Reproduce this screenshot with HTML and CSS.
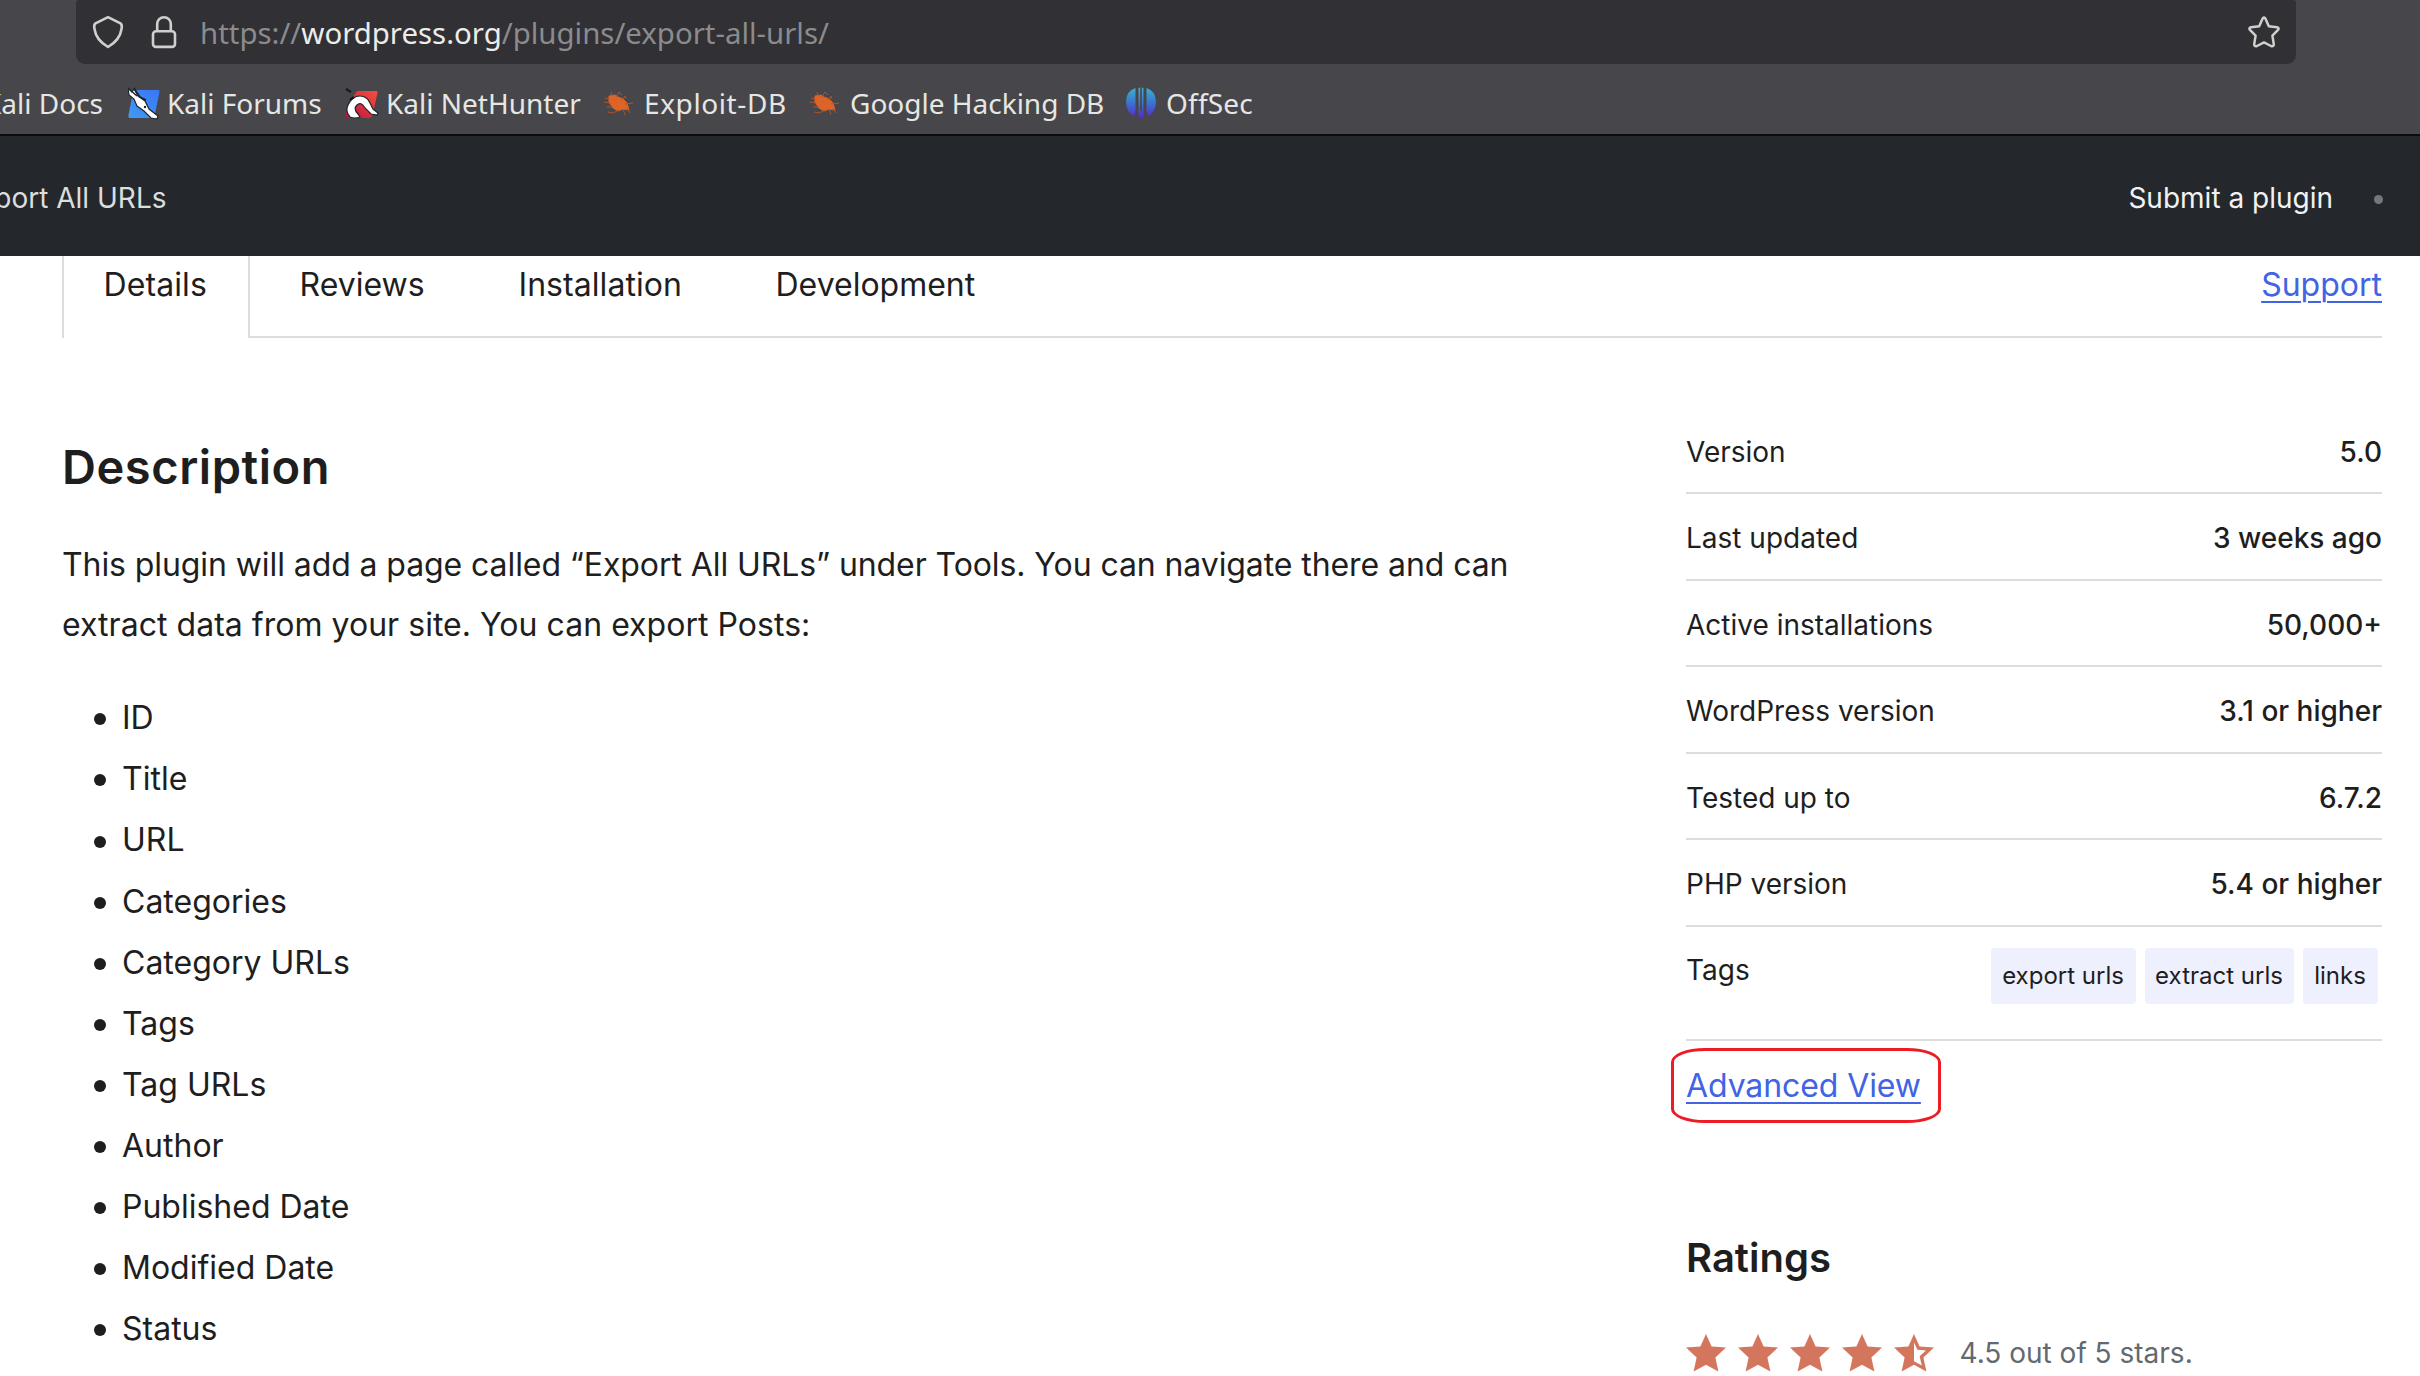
FILE: index.html
```
<!DOCTYPE html>
<html lang="en">
<head>
<meta charset="utf-8">
<title>Export All URLs</title>
<link rel="stylesheet" href="styles.css">
</head>
<body>
<svg class="defs" width="0" height="0" aria-hidden="true">
  <defs>
    <linearGradient id="blue" x1="1" y1="0" x2="0" y2="1"><stop offset="0" stop-color="#3b74f6"/><stop offset="1" stop-color="#3f9bf3"/></linearGradient>
    <linearGradient id="red" x1="1" y1="0" x2="0" y2="1"><stop offset="0" stop-color="#f4503c"/><stop offset="1" stop-color="#bd1240"/></linearGradient>
    <linearGradient id="offsec" gradientUnits="userSpaceOnUse" x1="0" y1="0" x2="0" y2="32"><stop offset="0" stop-color="#3fb4cf"/><stop offset=".5" stop-color="#3a73cf"/><stop offset="1" stop-color="#5b22d0"/></linearGradient>
    <symbol id="bug" viewBox="0 0 32 28">
      <path d="M6 7 12 6 15 8 20 10 24 14 26 21 20 20 15 22 10 19 6 13Z" fill="#dd6326" stroke="#dd6326" stroke-linejoin="round"/>
      <path d="M9 7 8 3M13 8 16 3 19 6M19 11 22 7 23 10M22 15 30 14M24 19 27 24M20 20 22 26M16 21 10 24 5 23M10 18 4 18M7 14 1 13M6 10 2 9" fill="none" stroke="#a9562f" stroke-width="1"/>
    </symbol>
    <symbol id="star" viewBox="0 0 40 38"><path d="M20 0 25.6 12.4 40 13.6 29.4 23.4 32.4 37.6 20 30.8 7.6 37.6 10.6 23.4 0 13.6 14.4 12.4Z"/></symbol>
  </defs>
</svg>

<div class="browser">
  <div class="urlbar">
    <svg class="shield" viewBox="0 0 32 34"><path d="M16 2.200 28.500 8.300Q30.500 10 29.500 14 28 25 16 32 4 25 2.500 14 1.500 10 3.500 8.300Z" fill="none" stroke="#cfcfcd" stroke-width="2.600" stroke-linejoin="round"/></svg>
    <svg class="lock" viewBox="0 0 28 34"><rect x="3" y="16.3" width="22" height="15.6" rx="3" fill="none" stroke="#cfcfcd" stroke-width="2.6"/><path d="M7.2 16V9a6.8 6.8 0 0 1 13.6 0v7" fill="none" stroke="#cfcfcd" stroke-width="2.6"/></svg>
    <span class="url">https://<b>wordpress.org</b>/plugins/export-all-urls/</span>
    <svg class="bookmark" viewBox="0 0 34 34"><path d="M17 2.6Q18 2.6 18.6 4L21.8 11.2 30 12.2Q32.8 13 30.8 15.2L25.4 20.6 26.8 29.2Q26.8 32 24 31L17 27.4 10 31Q7.2 32 7.2 29.2L8.6 20.6 3.2 15.2Q1.2 13 4 12.2L12.2 11.2 15.4 4Q16 2.6 17 2.6Z" fill="none" stroke="#cfcfcd" stroke-width="2.5" stroke-linejoin="round"/></svg>
  </div>
  <div class="bookmarks">
    <span class="bm bm-docs">Kali Docs</span>
    <span class="bm bm-forums"><svg width="33" height="33" viewBox="0 0 33 33"><path d="M3 3H30Q32 3 31.500 5L27 27Q26 31 24 31H2Q0 31 .5 28L5 5Z" fill="url(#blue)"/><path d="M0 1 4 5 6 2 10 9 17 14 21 22 30 29 29 32 23 31 16 24 9 19 6 12 1 8Z" fill="#fff" stroke="#20242b" stroke-width="1.2"/><path d="M1 2 9 9M6 1 12 10 18 13" stroke="#20242b" stroke-width="1.5" fill="none"/><circle cx="17" cy="20" r="1.2" fill="#20242b"/></svg>Kali Forums</span>
    <span class="bm bm-hunter"><svg width="34" height="31" viewBox="0 0 34 31"><path d="M12 3H31Q33 3 32.500 5L28 25Q27 30 24 30H4Q0 30 1 26L3 16Z" fill="url(#red)"/><path d="M5 29Q0 24 3 17 7 8 15 8 22 8 25 15L28 21 33 25 32 27 26 26 20 20Q16 13 12 17 8 21 13 26L15 29Q10 31 5 29Z" fill="#fff" stroke="#20242b" stroke-width="1.2"/><path d="M1 1 6 4M5 12 9 9" stroke="#17191e" stroke-width="2.200"/></svg>Kali NetHunter</span>
    <span class="bm bm-edb"><svg width="32" height="28"><use href="#bug"/></svg>Exploit-DB</span>
    <span class="bm bm-ghdb"><svg width="32" height="28"><use href="#bug"/></svg>Google Hacking DB</span>
    <span class="bm bm-offsec"><svg width="30" height="32" viewBox="0 0 30 32"><path d="M9.500 1V22Q9.500 27 7 29Q0 24 0 14Q.5 4 9.500 1ZM20.500 1V22Q20.500 27 23 29Q30 24 30 14Q29.500 4 20.500 1ZM12.500 1 14.200 .5V24H15.800V.5L17.500 1V30L15 32 12.500 30Z" fill="url(#offsec)"/></svg>OffSec</span>
  </div>
</div>

<header class="site">
  <span class="crumb">Export All URLs</span>
  <span class="submit">Submit a plugin</span>
  <i class="dot"></i>
</header>

<nav class="tabs">
  <a class="tab active">Details</a>
  <a class="tab reviews">Reviews</a>
  <a class="tab install">Installation</a>
  <a class="tab dev">Development</a>
  <a class="support">Support</a>
</nav>

<div class="page">
  <main class="content">
    <h2>Description</h2>
    <p><span class="lead">This plugin will add a page called “Export All URLs” under Tools. You can navigate there and can</span><br>extract data from your site. You can export Posts:</p>
    <ul>
      <li>ID</li>
      <li>Title</li>
      <li>URL</li>
      <li>Categories</li>
      <li>Category URLs</li>
      <li>Tags</li>
      <li>Tag URLs</li>
      <li>Author</li>
      <li>Published Date</li>
      <li>Modified Date</li>
      <li>Status</li>
    </ul>
  </main>
  <aside class="meta">
    <div class="row"><span>Version</span><b>5.0</b></div>
    <div class="row"><span>Last updated</span><b>3 weeks ago</b></div>
    <div class="row"><span>Active installations</span><b>50,000+</b></div>
    <div class="row"><span>WordPress version</span><b>3.1 or higher</b></div>
    <div class="row"><span>Tested up to</span><b>6.7.2</b></div>
    <div class="row"><span>PHP version</span><b>5.4 or higher</b></div>
    <div class="row tags"><span>Tags</span><div class="chips"><a class="c1">export urls</a><a class="c2">extract urls</a><a class="c3">links</a></div></div>
    <div class="advanced"><a>Advanced View</a><i class="ring"></i></div>
    <h3>Ratings</h3>
    <div class="rating">
      <svg width="40" height="38"><use href="#star"/></svg>
      <svg width="40" height="38"><use href="#star"/></svg>
      <svg width="40" height="38"><use href="#star"/></svg>
      <svg width="40" height="38"><use href="#star"/></svg>
      <svg width="40" height="38" viewBox="0 0 40 38"><path fill-rule="evenodd" d="M20 0 25.600 12.400 40 13.600 29.400 23.400 32.400 37.600 20 30.800 7.600 37.600 10.600 23.400 0 13.600 14.400 12.400ZM20 8.500V27.200L27.800 31.500 25.600 22.200 32 16.600 23.400 15.800Z"/></svg>
      <span>4.5 out of 5 stars.</span>
    </div>
  </aside>
</div>
</body>
</html>
```
FILE: styles.css
```
* { box-sizing: border-box; }
body { margin: 0; width: 2420px; height: 1376px; overflow: hidden; background: #fff; color: #1e1e1e; font-family: Inter, sans-serif; font-size: 32px; }
.defs { position: absolute; }
svg { display: block; flex: none; }
b { font-weight: inherit; }

/* Browser chrome */
.browser { height: 136px; background: #46464b; border-bottom: 2px solid #0c0c0e; font-family: "Noto Sans", sans-serif; color: #e6e6e3; }
.urlbar { display: flex; align-items: center; height: 64px; margin-left: 76px; width: 2220px; padding: 0 15px 0 16px; background: #303035; border-radius: 3px 3px 9px 9px; font-size: 29.4px; color: #8b8b8d; }
.urlbar b { color: #ecece9; }
.shield { width: 32px; height: 34px; }
.lock { width: 28px; height: 34px; margin-left: 26px; }
.url { margin-left: 22px; line-height: 64px; padding-top: 1px; }
.bookmark { width: 34px; height: 34px; margin-left: auto; }
.bookmarks { display: flex; align-items: center; height: 70px; padding-top: 8px; font-size: 28px; white-space: nowrap; }
.bm { display: flex; align-items: center; line-height: 62px; }
.bm-docs { width: 103px; justify-content: flex-end; }
.bm-forums { margin-left: 25px; width: 217px; gap: 6px; }
.bm-hunter { width: 258px; gap: 7px; }
.bm-edb { width: 206px; gap: 9px; letter-spacing: .6px; }
.bm-ghdb { width: 317px; gap: 9px; }
.bm-offsec { gap: 10px; letter-spacing: .2px; }

/* Site header */
.site { display: flex; align-items: center; height: 120px; padding-top: 4px; background: #24282d; color: #f2f2f2; font-size: 28px; white-space: nowrap; }
.crumb { display: flex; justify-content: flex-end; width: 166.5px; color: #dcdddd; }
.submit { margin-left: auto; }
.dot { width: 9px; height: 9px; border-radius: 50%; background: #74777b; margin: 3px 37px 0 41px; }

/* Tabs */
.tabs { display: flex; height: 82px; margin: 0 38px 0 62px; line-height: 58px; }
.tab, .support { border-bottom: 2px solid #ddd; }
.active { width: 188px; padding-left: 39.5px; border: solid #ddd; border-width: 0 2px; letter-spacing: .1px; }
.reviews { width: 219px; padding-left: 49.5px; }
.install { width: 257px; padding-left: 49.5px; letter-spacing: .06px; }
.dev { flex: 1; padding-left: 49.5px; }
.support, .advanced a { color: #4163e4; text-decoration: underline 2px; text-underline-offset: 5px; }

/* Description */
.page { display: flex; justify-content: space-between; padding: 0 38px 0 62px; }
h2, h3, p, ul { margin: 0; padding: 0; font-weight: 400; }
h2 { margin-top: 99px; font-size: 47px; line-height: 60px; font-weight: 600; letter-spacing: .55px; }
p { margin-top: 38px; line-height: 60px; white-space: nowrap; letter-spacing: .03px; }
.lead { letter-spacing: -.085px; }
ul { margin-top: 32.4px; list-style: none; line-height: 61.05px; }
li { display: flex; align-items: center; gap: 16px; padding-left: 32px; }
li::before { content: ""; width: 12px; height: 12px; margin-top: 3px; border-radius: 50%; background: #1e1e1e; }

/* Plugin meta */
.meta { width: 696px; padding-top: 69.5px; font-size: 28px; }
.row { display: flex; justify-content: space-between; height: 86.55px; padding-top: 22px; border-bottom: 2px solid #ddd; line-height: 44px; }
.row b { font-weight: 500; }
.tags { height: 114.7px; padding-top: 21px; }
.chips { display: flex; gap: 9px; padding-right: 4.5px; font-size: 24px; }
.chips a { display: flex; align-items: center; justify-content: center; height: 56px; background: #eff0fe; border-radius: 4px; }
.c1 { width: 145px; }
.c2 { width: 149px; }
.c3 { width: 75px; }
.advanced { position: relative; margin-top: 14.4px; line-height: 60px; font-size: 32px; }
.advanced a { letter-spacing: -.1px; }
.ring { position: absolute; left: -15px; top: -8px; width: 270px; height: 75px; border: 3px solid #ed1c24; border-radius: 34px / 14px; }
h3 { margin-top: 112px; font-size: 40px; line-height: 60px; font-weight: 600; }
.rating { display: flex; align-items: center; gap: 12px; margin-top: 45px; height: 40px; color: #646970; fill: #d4755d; }
.rating span { margin-left: 13.5px; }
```
